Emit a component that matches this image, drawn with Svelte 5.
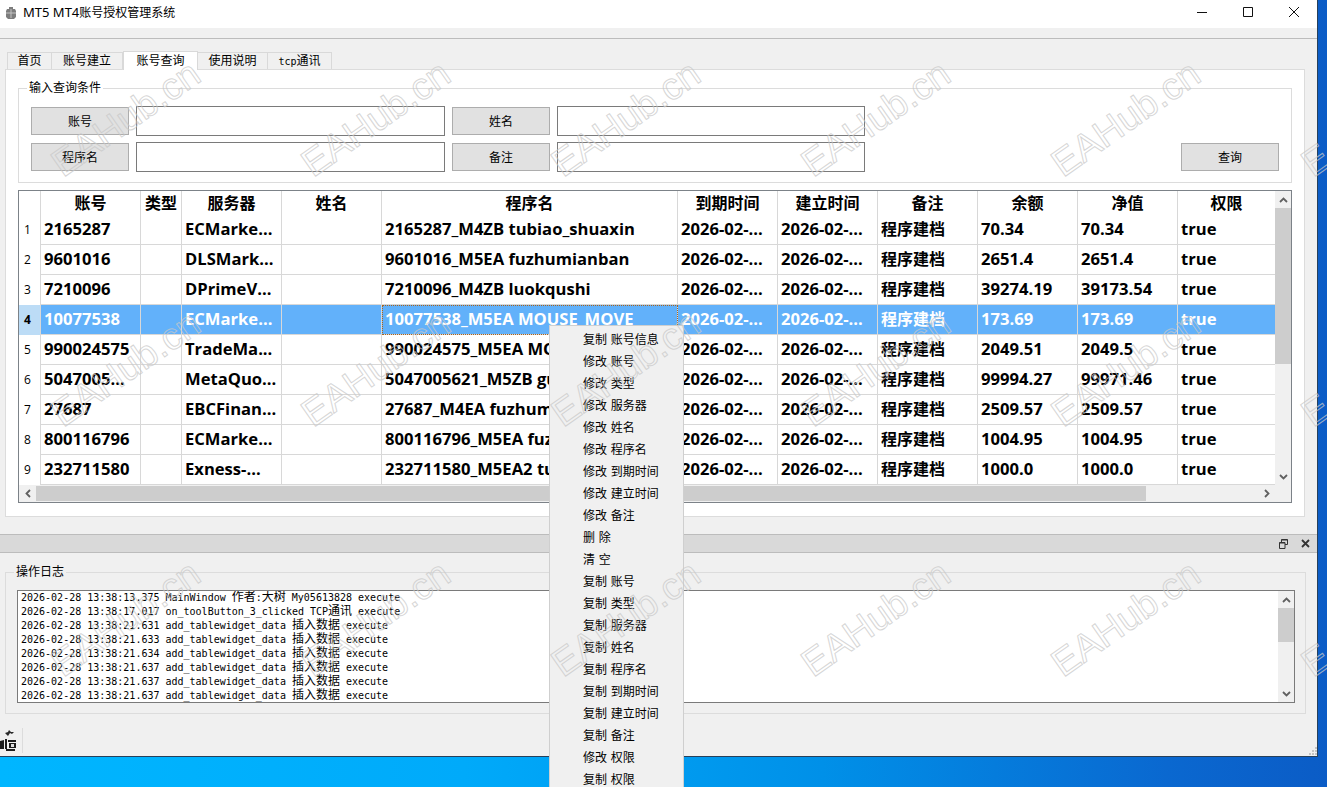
<script>
  const cols = [22, 100, 41, 100, 100, 296, 100, 100, 100, 100, 100, 97];
  const headers = ['账号', '类型', '服务器', '姓名', '程序名', '到期时间', '建立时间', '备注', '余额', '净值', '权限'];
  const d = '2026-02-...';
  const rows = [
    ['2165287', 'ECMarke...', '2165287_M4ZB tubiao_shuaxin', '70.34', '70.34'],
    ['9601016', 'DLSMark...', '9601016_M5EA fuzhumianban', '2651.4', '2651.4'],
    ['7210096', 'DPrimeV...', '7210096_M4ZB luokqushi', '39274.19', '39173.54'],
    ['10077538', 'ECMarke...', '10077538_M5EA MOUSE_MOVE', '173.69', '173.69'],
    ['990024575', 'TradeMa...', '990024575_M5EA MOUSE_MOVE', '2049.51', '2049.5'],
    ['5047005...', 'MetaQuo...', '5047005621_M5ZB guadan', '99994.27', '99971.46'],
    ['27687', 'EBCFinan...', '27687_M4EA fuzhumianban', '2509.57', '2509.57'],
    ['800116796', 'ECMarke...', '800116796_M5EA fuzhumianban', '1004.95', '1004.95'],
    ['232711580', 'Exness-...', '232711580_M5EA2 tubiao', '1000.0', '1000.0']
  ];
  const menu = ['复制 账号信息', '修改 账号', '修改 类型', '修改 服务器', '修改 姓名', '修改 程序名', '修改 到期时间', '修改 建立时间', '修改 备注', '删 除', '清 空', '复制 账号', '复制 类型', '复制 服务器', '复制 姓名', '复制 程序名', '复制 到期时间', '复制 建立时间', '复制 备注', '修改 权限', '复制 权限'];
  const tabs = ['首页', '账号建立', '账号查询', '使用说明'];
  const ins = ['13:38:21.631', '13:38:21.633', '13:38:21.634', '13:38:21.637', '13:38:21.637', '13:38:21.637'];
  const marks = [];
  for (const y of [178, 428, 678]) for (const x of [63, 313, 563, 813, 1063, 1313]) marks.push({ x, y });
</script>

<div class="desk">
  <div class="win">
    <header class="title">
      <svg class="appicon" width="14" height="14" viewBox="0 0 14 14"><path d="M5 1h4v2h2l1 2v6l-2 2H4l-2-2V5l1-2h2z" fill="#7d7d7d"/><path d="M2 7h10M7 3v9" stroke="#c4c4c4" stroke-width="1"/></svg>
      <span class="apptitle"><span class="lat">MT5 MT4</span>账号授权管理系统</span>
      <div class="ctrls">
        <svg width="46" height="24" viewBox="0 0 46 24"><path d="M18 12.5h10" stroke="#111"/></svg>
        <svg width="46" height="24" viewBox="0 0 46 24"><path d="M18.5 7.5h9v9h-9z" fill="none" stroke="#111"/></svg>
        <svg width="46" height="24" viewBox="0 0 46 24"><path d="M18 7l10 10M28 7L18 17" fill="none" stroke="#111"/></svg>
      </div>
    </header>
    <div class="menubar"></div>

    <nav class="tabs">
      {#each tabs as t, i}
        <div class="tab" class:sel={i === 2}>{t}</div>
      {/each}
      <div class="tab"><span class="mono">tcp</span>通讯</div>
    </nav>

    <section class="pane">
      <fieldset class="query">
        <legend>输入查询条件</legend>
        <div class="form">
          <div class="btn">账号</div>
          <div class="edit"></div>
          <div class="btn">姓名</div>
          <div class="edit"></div>
          <div></div>
          <div></div>
          <div class="btn">程序名</div>
          <div class="edit"></div>
          <div class="btn">备注</div>
          <div class="edit"></div>
          <div></div>
          <div class="btn">查询</div>
        </div>
      </fieldset>

      <div class="frame">
        <div class="tablewrap">
          <table>
            <colgroup>
              {#each cols as c}<col style="width:{c}px" />{/each}
            </colgroup>
            <thead>
              <tr>
                <th class="corner"></th>
                {#each headers as h}<th>{h}</th>{/each}
              </tr>
            </thead>
            <tbody>
              {#each rows as r, i}
                <tr class:selrow={i === 3}>
                  <td class="num">{i + 1}</td>
                  <td>{r[0]}</td>
                  <td></td>
                  <td>{r[1]}</td>
                  <td></td>
                  <td class:focus={i === 3}>{r[2]}</td>
                  <td>{d}</td>
                  <td>{d}</td>
                  <td class="cncell">程序建档</td>
                  <td>{r[3]}</td>
                  <td>{r[4]}</td>
                  <td>true</td>
                </tr>
              {/each}
            </tbody>
          </table>
        </div>
        <div class="vs main-vs">
          <div class="arrow"><svg width="9" height="6" viewBox="0 0 9 6"><path d="M1 5l3.5-3.5L8 5" fill="none" stroke="#606060" stroke-width="1.8"/></svg></div>
          <div class="thumb"></div>
          <div class="spring"></div>
          <div class="arrow"><svg width="9" height="6" viewBox="0 0 9 6"><path d="M1 1l3.5 3.5L8 1" fill="none" stroke="#606060" stroke-width="1.8"/></svg></div>
        </div>
        <div class="hs">
          <div class="harrow"><svg width="6" height="9" viewBox="0 0 6 9"><path d="M5 1L1.5 4.5 5 8" fill="none" stroke="#606060" stroke-width="1.8"/></svg></div>
          <div class="hthumb"></div>
          <div class="spring"></div>
          <div class="harrow"><svg width="6" height="9" viewBox="0 0 6 9"><path d="M1 1l3.5 3.5L1 8" fill="none" stroke="#606060" stroke-width="1.8"/></svg></div>
        </div>
        <div class="cornerbox"></div>
      </div>
    </section>

    <div class="dock">
      <svg width="9" height="10" viewBox="0 0 9 10"><path d="M2.5 3V.5h6v5H6M.5 3.5h5.5v6H.5z" fill="none" stroke="#333"/><path d="M.5 4h5.5M2.5 1h6" stroke="#333"/></svg>
      <svg width="9" height="9" viewBox="0 0 9 9"><path d="M1 1l7 7M8 1L1 8" stroke="#333" stroke-width="1.8"/></svg>
    </div>

    <fieldset class="logbox">
      <legend>操作日志</legend>
      <div class="logframe">
        <div class="lines">
          <div class="line">2026-02-28 13:38:13.375 MainWindow <span class="cn">作者</span>:<span class="cn">大树</span> My05613828 execute</div>
          <div class="line">2026-02-28 13:38:17.017 on_toolButton_3_clicked TCP<span class="cn">通讯</span> execute</div>
          {#each ins as t}
            <div class="line">2026-02-28 {t} add_tablewidget_data <span class="cn">插入数据</span> execute</div>
          {/each}
        </div>
        <div class="vs log-vs">
          <div class="arrow"><svg width="9" height="6" viewBox="0 0 9 6"><path d="M1 5l3.5-3.5L8 5" fill="none" stroke="#606060" stroke-width="1.8"/></svg></div>
          <div class="thumb"></div>
          <div class="spring"></div>
          <div class="arrow"><svg width="9" height="6" viewBox="0 0 9 6"><path d="M1 1l3.5 3.5L8 1" fill="none" stroke="#606060" stroke-width="1.8"/></svg></div>
        </div>
      </div>
    </fieldset>

    <footer class="toolbar">
      <div class="toolicon">
        <svg width="22" height="24" viewBox="0 0 22 24"><path d="M0 13l4-1v9H0zM5 11h2v10H5zM8 12h8v2H8zM9 15h7v5H9zM6 21h9v2H6z" fill="#1c1c1c"/><path d="M5 5l3-1 1-2 2 2h3l-2 2-2-1-2 3z" fill="#2a2a2a"/><path d="M11 16h3v3h-3z" fill="#ddd"/></svg>
      </div>
      <svg class="grip" width="8" height="8" viewBox="0 0 8 8"><path d="M6 0h2v2H6zM3 3h2v2H3zM6 3h2v2H6zM0 6h2v2H0zM3 6h2v2H3zM6 6h2v2H6z" fill="#c4c4c4"/></svg>
    </footer>
  </div>

  <ul class="menu">
    {#each menu as m}<li>{m}</li>{/each}
  </ul>

  <svg class="marks" width="1327" height="787" aria-hidden="true">
    {#each marks as m}
      <text x={m.x} y={m.y} transform="rotate(-35 {m.x} {m.y})">EAHub.cn</text>
    {/each}
  </svg>
</div>

<style>
  :global(body) { margin: 0; }
  .desk {
    position: relative;
    width: 1327px;
    height: 787px;
    overflow: hidden;
    background: linear-gradient(90deg, #00b6ff 0%, #00aafa 35%, #0090e8 62%, #0a68d0 88%, #0b5cc6 100%);
    font: 12px "Noto Sans", "Noto Sans CJK SC", sans-serif;
    color: #000;
  }
  .win {
    box-sizing: border-box;
    width: 1318px;
    height: 757px;
    background: #f0f0f0;
    border-right: 1px solid #27405a;
    border-bottom: 1px solid #27405a;
    display: flex;
    flex-direction: column;
  }
  .title {
    height: 28px;
    flex: none;
    background: #fff;
    display: flex;
    align-items: center;
  }
  .appicon { margin-left: 4px; padding-bottom: 2px; }
  .apptitle { margin-left: 5px; font-size: 12px; padding-bottom: 4px; }
  .lat { font-size: 13px; }
  .ctrls { margin-left: auto; display: flex; padding-bottom: 4px; }
  .ctrls svg { display: block; }
  .menubar { height: 10px; flex: none; border-bottom: 1px solid #bcbcbc; }

  .tabs {
    margin: 11px 0 0 7px;
    height: 19px;
    flex: none;
    display: grid;
    grid-template-columns: 45px 71px 75px 70px 64px;
    width: 325px;
    align-items: end;
  }
  .tab {
    box-sizing: border-box;
    height: 17px;
    line-height: 16px;
    text-align: center;
    border: 1px solid #d9d9d9;
    border-bottom: 0;
    border-left-width: 0;
    background: #f0f0f0;
  }
  .tab:first-child { border-left-width: 1px; }
  .tab.sel {
    height: 19px;
    line-height: 17px;
    background: #fff;
    border-left-width: 1px;
    position: relative;
    top: 1px;
  }
  .mono { font-family: "DejaVu Sans Mono", monospace; font-size: 10px; }

  .pane {
    box-sizing: border-box;
    flex: none;
    margin: 0 12px 0 5px;
    height: 448px;
    background: #fff;
    border: 1px solid #dcdcdc;
    padding: 10px 12px 13px;
  }
  fieldset {
    margin: 0;
    min-width: 0;
    border: 1px solid #dcdcdc;
  }
  legend {
    padding: 0 2px;
    line-height: 16px;
    font-size: 12px;
  }
  .query legend { margin-left: -4px; }
  .logbox legend { margin-left: -3px; }
  .query {
    box-sizing: border-box;
    height: 103px;
    padding: 10px 12px 0;
  }
  .form {
    display: grid;
    grid-template-columns: 98px 309px 98px 308px 1fr 98px;
    grid-template-rows: 30px 30px;
    gap: 6px 7px;
    align-items: center;
  }
  .btn {
    box-sizing: border-box;
    height: 28px;
    line-height: 28px;
    text-align: center;
    background: #e1e1e1;
    border: 1px solid #adadad;
  }
  .edit {
    box-sizing: border-box;
    height: 30px;
    background: #fff;
    border: 1px solid #7a7a7a;
  }

  .frame {
    box-sizing: border-box;
    margin-top: 7px;
    height: 313px;
    border: 1px solid #7c8288;
    background: #f0f0f0;
    display: grid;
    grid-template-columns: 1256px 16px;
    grid-template-rows: 294px 17px;
  }
  .tablewrap { overflow: hidden; background: #fff; }
  table {
    border-collapse: separate;
    border-spacing: 0;
    table-layout: fixed;
    width: 1256px;
    font-size: 16px;
    font-weight: 700;
    font-family: "Open Sans", "Noto Sans CJK SC", sans-serif;
  }
  th {
    box-sizing: border-box;
    height: 24px;
    padding: 0;
    font-weight: 700;
    text-align: center;
    line-height: 22px;
    border-right: 1px solid #d8d8d8;
    background: #fff;
  }
  th:last-child { border-right: 0; }
  td {
    box-sizing: border-box;
    height: 30px;
    padding: 0 0 2px 3px;
    font-size: 16.6px;
    line-height: 26px;
    white-space: nowrap;
    overflow: hidden;
    border-right: 1px solid #d8d8d8;
    border-bottom: 1px solid #d8d8d8;
    background: #fff;
  }
  td:last-child { border-right: 0; }
  td.cncell { font-size: 16px; }
  td.num {
    font-size: 12px;
    font-weight: 400;
    padding-left: 5px;
    padding-bottom: 0;
    line-height: 30px;
    border-bottom: 0;
  }
  .selrow td {
    background: #62b1fa;
    color: #fff;
  }
  .selrow td.num {
    background: #bcdcf6;
    color: #000;
    font-weight: 700;
  }
  td.focus {
    outline: 1px dotted #a8641e;
    outline-offset: -1px;
  }

  .vs { display: flex; flex-direction: column; background: #f0f0f0; width: 16px; }
  .arrow { height: 17px; display: flex; align-items: center; justify-content: center; flex: none; }
  .thumb { background: #cdcdcd; flex: none; }
  .main-vs .thumb { height: 156px; }
  .log-vs { height: 111px; }
  .log-vs .thumb { height: 34px; }
  .spring { flex: 1; }
  .hs {
    display: flex;
    height: 15px;
    margin-top: 1px;
    background: #f0f0f0;
  }
  .harrow { width: 17px; flex: none; display: flex; align-items: center; justify-content: center; }
  .hthumb { width: 1110px; flex: none; background: #cdcdcd; }
  .cornerbox { background: #f0f0f0; }

  .dock {
    box-sizing: border-box;
    flex: none;
    margin-top: 17px;
    height: 19px;
    background: #d9d9d9;
    border-top: 1px solid #bcbcbc;
    border-bottom: 1px solid #bcbcbc;
    display: flex;
    justify-content: flex-end;
    align-items: center;
    gap: 13px;
    padding-right: 7px;
  }

  .logbox {
    box-sizing: border-box;
    flex: none;
    margin: 11px 11px 0 5px;
    height: 150px;
    padding: 10px 10px 0 11px;
  }
  .logframe {
    box-sizing: border-box;
    height: 113px;
    background: #fff;
    border: 1px solid #7a7a7a;
    display: grid;
    grid-template-columns: 1fr 16px;
  }
  .lines { overflow: hidden; padding-left: 3px; }
  .line {
    height: 14px;
    white-space: pre;
    font: 10px/10px "DejaVu Sans Mono", "Noto Sans CJK SC", monospace;
  }
  .cn { font: 12px/10px "Noto Sans CJK SC", sans-serif; }

  .toolbar {
    flex: 1;
    display: flex;
    justify-content: space-between;
    margin-top: 14px;
  }
  .toolicon {
    width: 22px;
    height: 25px;
    border-right: 1px solid #dcdcdc;
  }
  .toolicon svg { display: block; }
  .grip { align-self: flex-end; margin-bottom: 1px; }

  .menu {
    position: absolute;
    left: 549px;
    top: 325px;
    width: 133px;
    margin: 0;
    padding: 2px 0 0;
    list-style: none;
    background: #f0f0f0;
    border: 1px solid #cfcfcf;
  }
  .menu li {
    height: 22px;
    padding-left: 33px;
    font: 12px/22px "Noto Sans CJK SC", sans-serif;
    word-spacing: 1px;
    white-space: nowrap;
  }

  .marks {
    position: absolute;
    left: 0;
    top: 0;
    pointer-events: none;
  }
  .marks text {
    font: 38px "Liberation Sans", sans-serif;
    fill: none;
    stroke: #c8c8c8;
    stroke-opacity: 0.75;
    stroke-width: 1;
  }
</style>
